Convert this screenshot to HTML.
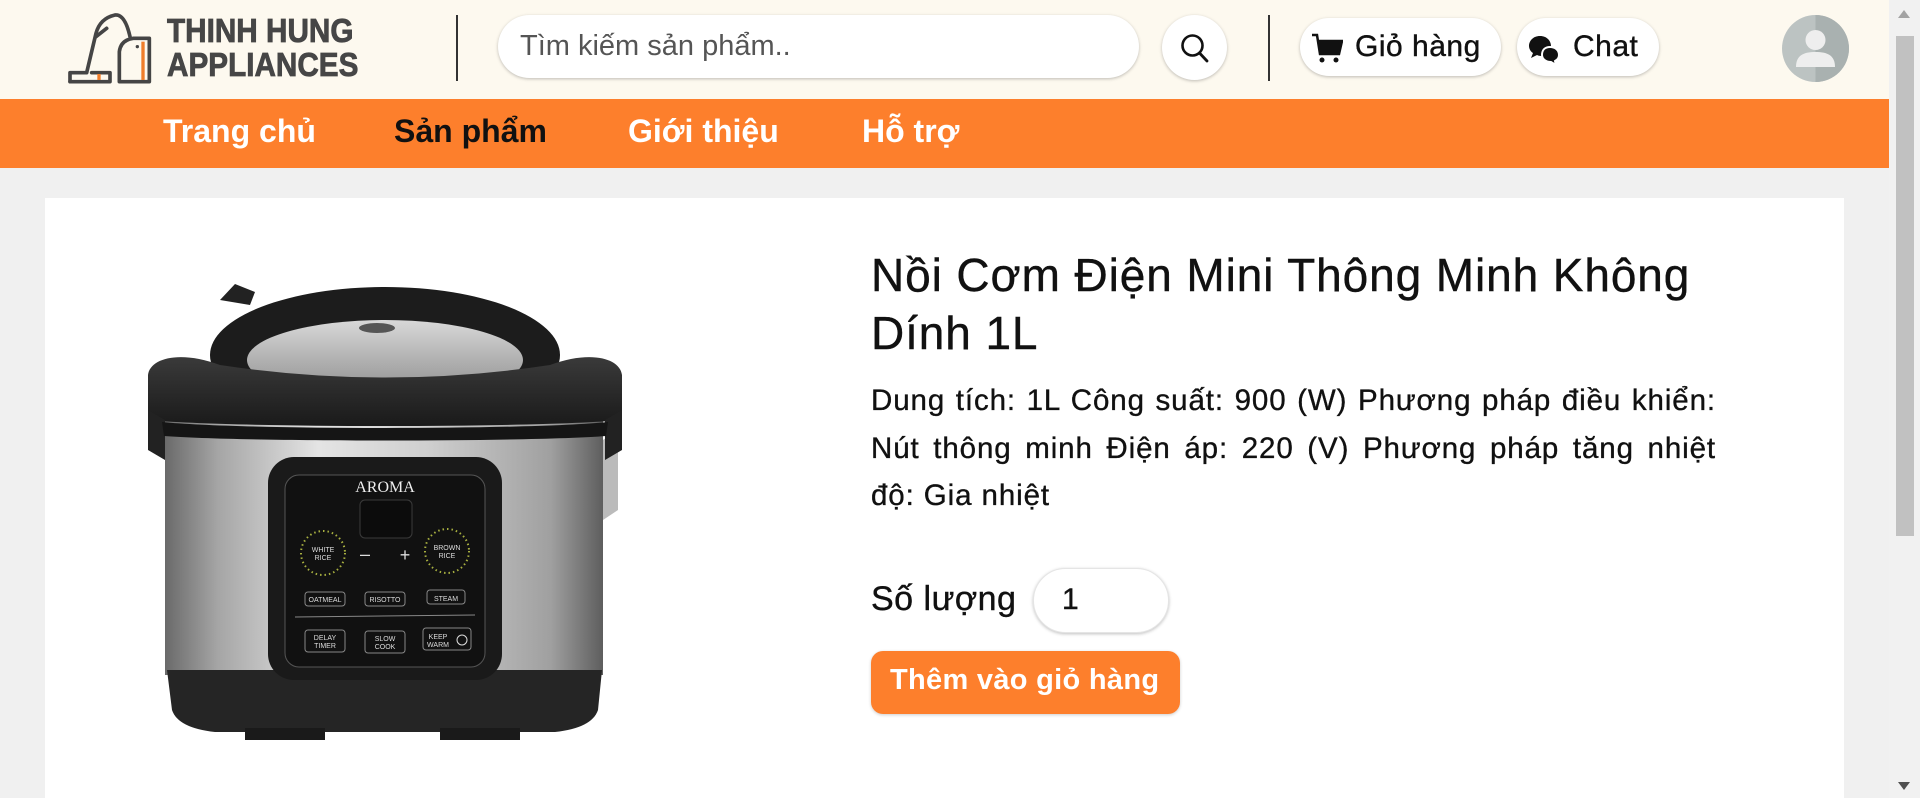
<!DOCTYPE html>
<html><head><meta charset="utf-8"><style>
*{margin:0;padding:0;box-sizing:border-box}
body{width:1920px;height:798px;overflow:hidden;background:#f0f0f0;font-family:"Liberation Sans",sans-serif;position:relative}
.hdr{position:absolute;left:0;top:0;width:1889px;height:99px;background:#fdf9ef}
.nav{position:absolute;left:0;top:99px;width:1889px;height:69px;background:#fd7f2c}
.nav span{position:absolute;top:14px;font-size:32px;font-weight:bold;color:#fff;letter-spacing:0px}
.abs{position:absolute}
.pill{position:absolute;background:#fff;border-radius:40px;box-shadow:0 1px 3px rgba(0,0,0,.25)}
.card{position:absolute;left:45px;top:198px;width:1799px;height:600px;background:#fff}
.t{position:absolute;color:#111;-webkit-text-stroke:0.4px #111}
.sb{position:absolute;left:1889px;top:0;width:31px;height:798px;background:#f1f1f1}
</style></head><body>
<div class="hdr"></div>
<svg class="abs" style="left:60px;top:10px" width="100" height="80" viewBox="0 0 300 240">
<g fill="none" stroke="#454545" stroke-width="11" stroke-linejoin="round" stroke-linecap="round">
<path d="M30,215 L30,188 L80,188 L108,70 Q120,25 165,15 Q195,12 210,80"/>
<path d="M30,215 L150,215 L150,188 L95,188"/>
<path d="M178,215 L178,125 Q182,90 220,85 L268,85 L268,215 Z"/>
<path d="M108,80 L140,55"/>
</g>
<rect x="244" y="95" width="10" height="115" fill="#f07d2a"/>
<rect x="112" y="192" width="10" height="18" fill="#f07d2a"/>
<circle cx="232" cy="110" r="5" fill="#454545"/>
</svg>
<div class="abs" style="left:167px;top:14px;font-size:33px;font-weight:bold;color:#464646;line-height:34px;transform:scaleX(0.9);transform-origin:0 0;-webkit-text-stroke:0.8px #464646">THINH HUNG<br>APPLIANCES</div>
<div class="abs" style="left:456px;top:15px;width:2px;height:66px;background:#333"></div>
<div class="pill" style="left:498px;top:15px;width:641px;height:63px"></div>
<div class="abs" style="left:520px;top:30px;font-size:29px;color:#555">Tìm kiếm sản phẩm..</div>
<div class="pill" style="left:1162px;top:15px;width:65px;height:65px;border-radius:50%"></div>
<svg class="abs" style="left:1180px;top:33px" width="30" height="32" viewBox="0 0 30 32"><circle cx="12.5" cy="12.5" r="10" fill="none" stroke="#111" stroke-width="2.6"/><path d="M19.5 20 L27 28" stroke="#111" stroke-width="2.8" stroke-linecap="round"/></svg>
<div class="abs" style="left:1268px;top:15px;width:2px;height:66px;background:#333"></div>
<div class="pill" style="left:1300px;top:18px;width:201px;height:58px"></div>
<svg class="abs" style="left:1311px;top:32px" width="32" height="32" viewBox="0 0 32 32"><path d="M1 3 L6 3 L9 22 L28 22 L31 9 L8 9" fill="none" stroke="#111" stroke-width="2.5"/><path d="M8 9 L31 9 L28 22 L9 22 Z" fill="#111"/><circle cx="11" cy="28" r="2.5" fill="#111"/><circle cx="25" cy="28" r="2.5" fill="#111"/></svg>
<div class="t" style="left:1355px;top:30px;font-size:30px;letter-spacing:0.5px">Giỏ hàng</div>
<div class="pill" style="left:1517px;top:18px;width:142px;height:58px"></div>
<svg class="abs" style="left:1528px;top:34px" width="32" height="32" viewBox="0 0 32 32"><path d="M12 2 C5 2 1 7 1 12 C1 15 3 18 5 19 L3 24 L9 21 C11 22 13 22 14 22 C20 22 23 17 23 12 C23 7 19 2 12 2Z" fill="#111"/><path d="M22 13 C27 13 31 16 31 21 C31 24 29 26 27 27 L28 31 L23 28 C18 28 14 25 14 21 C14 16 17 13 22 13Z" fill="#111" stroke="#fff" stroke-width="2"/></svg>
<div class="t" style="left:1573px;top:30px;font-size:30px;letter-spacing:0.5px">Chat</div>
<svg class="abs" style="left:1782px;top:15px" width="67" height="67" viewBox="0 0 67 67"><circle cx="33.5" cy="33.5" r="33.5" fill="#bcc3c2"/><path d="M33.5 0 A33.5 33.5 0 0 1 33.5 67 Z" fill="#a9b1b0"/><circle cx="33.5" cy="25" r="10" fill="#eee"/><path d="M14 52 C14 40 22 37 33.5 37 C45 37 53 40 53 52 Z" fill="#eee"/></svg>
<div class="nav">
<span style="left:163px">Trang chủ</span>
<span style="left:394px;color:#111">Sản phẩm</span>
<span style="left:628px">Giới thiệu</span>
<span style="left:862px">Hỗ trợ</span>
</div>
<div class="card"></div>
<svg class="abs" style="left:140px;top:270px" width="490" height="480" viewBox="0 0 490 480">
<defs>
<linearGradient id="sv" x1="0" x2="1"><stop offset="0" stop-color="#6a6a6a"/><stop offset=".12" stop-color="#a5a5a5"/><stop offset=".35" stop-color="#e4e4e4"/><stop offset=".6" stop-color="#cfcfcf"/><stop offset=".88" stop-color="#a0a0a0"/><stop offset="1" stop-color="#5e5e5e"/></linearGradient>
<linearGradient id="lid" x1="0" y1="0" x2="0" y2="1"><stop offset="0" stop-color="#3a3a3a"/><stop offset="1" stop-color="#1a1a1a"/></linearGradient>
<linearGradient id="dome" x1="0" y1="0" x2="0" y2="1"><stop offset="0" stop-color="#d8d8d8"/><stop offset="1" stop-color="#8a8a8a"/></linearGradient>
</defs>
<path d="M80,30 L95,14 L115,22 L110,35 Z" fill="#222"/>
<ellipse cx="245" cy="85" rx="175" ry="68" fill="#1c1c1c"/>
<ellipse cx="245" cy="90" rx="138" ry="40" fill="url(#dome)"/>
<ellipse cx="237" cy="58" rx="18" ry="5" fill="#555"/>
<path d="M25,150 L463,150 L463,405 L25,405 Z" fill="url(#sv)"/>
<path d="M463,170 L478,160 L478,240 L463,250 Z" fill="#bbb"/>
<path d="M8,150 L8,105 C10,88 40,80 80,95 Q245,120 410,95 C450,80 480,88 482,105 L482,150 C400,158 90,158 8,150 Z" fill="url(#lid)"/>
<path d="M8,180 L8,140 L25,150 L25,190 Z M482,180 L482,140 L465,150 L465,190 Z" fill="#222"/>
<path d="M22,152 C100,160 390,160 468,152 L466,166 C390,172 100,172 24,166 Z" fill="#151515"/>
<path d="M27,400 L462,400 L458,440 Q452,458 415,462 L75,462 Q38,458 32,440 Z" fill="#252525"/>
<rect x="105" y="458" width="80" height="12" fill="#1a1a1a"/><rect x="300" y="458" width="80" height="12" fill="#1a1a1a"/>
<rect x="128" y="187" width="234" height="223" rx="26" fill="#1a1a1a"/>
<rect x="145" y="205" width="200" height="192" rx="14" fill="#111" stroke="#555" stroke-width="1"/>
<text x="245" y="222" text-anchor="middle" font-family="Liberation Serif" font-size="16" fill="#eee">AROMA</text>
<rect x="220" y="230" width="52" height="38" rx="5" fill="#0c0c0c" stroke="#3a3a3a"/>
<circle cx="183" cy="283" r="22" fill="none" stroke="#a8b040" stroke-width="2" stroke-dasharray="1.5 3"/>
<circle cx="307" cy="281" r="22" fill="none" stroke="#a8b040" stroke-width="2" stroke-dasharray="1.5 3"/>
<g font-family="Liberation Sans" font-size="7" fill="#ddd" text-anchor="middle">
<text x="183" y="282">WHITE</text><text x="183" y="290">RICE</text>
<text x="307" y="280">BROWN</text><text x="307" y="288">RICE</text>
<text x="185" y="332">OATMEAL</text><text x="245" y="332">RISOTTO</text><text x="306" y="331">STEAM</text>
<text x="185" y="370">DELAY</text><text x="185" y="378">TIMER</text>
<text x="245" y="371">SLOW</text><text x="245" y="379">COOK</text>
<text x="298" y="369">KEEP</text><text x="298" y="377">WARM</text>
</g>
<text x="225" y="290" font-size="18" fill="#ddd" text-anchor="middle" font-family="Liberation Sans">–</text>
<text x="265" y="291" font-size="18" fill="#ddd" text-anchor="middle" font-family="Liberation Sans">+</text>
<g fill="none" stroke="#888" stroke-width="1">
<rect x="165" y="322" width="40" height="14" rx="3"/><rect x="225" y="322" width="40" height="14" rx="3"/><rect x="287" y="320" width="38" height="14" rx="3"/>
<rect x="165" y="360" width="40" height="22" rx="3"/><rect x="225" y="361" width="40" height="22" rx="3"/><rect x="283" y="358" width="48" height="22" rx="3"/>
<path d="M155,347 L335,345"/>
<circle cx="322" cy="370" r="5" stroke="#ddd"/>
</g>
</svg>
<div class="t" style="left:871px;top:246px;width:940px;font-size:46px;line-height:58px;letter-spacing:0.9px">Nồi Cơm Điện Mini Thông Minh Không<br>Dính 1L</div>
<div class="t" style="left:871px;top:377px;width:845px;font-size:29.5px;line-height:47.5px;letter-spacing:0.9px;text-align:justify;-webkit-text-stroke:0.35px #111">Dung tích: 1L Công suất: 900 (W) Phương pháp điều khiển: Nút thông minh Điện áp: 220 (V) Phương pháp tăng nhiệt độ: Gia nhiệt</div>
<div class="t" style="left:871px;top:580px;font-size:34px;letter-spacing:0.5px">Số lượng</div>
<div class="pill" style="left:1033px;top:568px;width:136px;height:65px;border:1px solid #e5e5e5"></div>
<div class="t" style="left:1062px;top:583px;font-size:30px">1</div>
<div class="abs" style="left:871px;top:651px;width:309px;height:63px;background:#fd7f2c;border-radius:12px;box-shadow:0 1px 3px rgba(0,0,0,.2)"></div>
<div class="abs" style="left:890px;top:664px;font-size:29px;font-weight:bold;color:#fff;letter-spacing:0.3px">Thêm vào giỏ hàng</div>
<div class="sb"><div style="position:absolute;left:7px;top:36px;width:18px;height:500px;background:#c1c1c1"></div>
<div style="position:absolute;left:9px;top:10px;width:0;height:0;border-left:6px solid transparent;border-right:6px solid transparent;border-bottom:8px solid #a3a3a3"></div>
<div style="position:absolute;left:9px;top:782px;width:0;height:0;border-left:6px solid transparent;border-right:6px solid transparent;border-top:8px solid #505050"></div></div>
</body></html>
